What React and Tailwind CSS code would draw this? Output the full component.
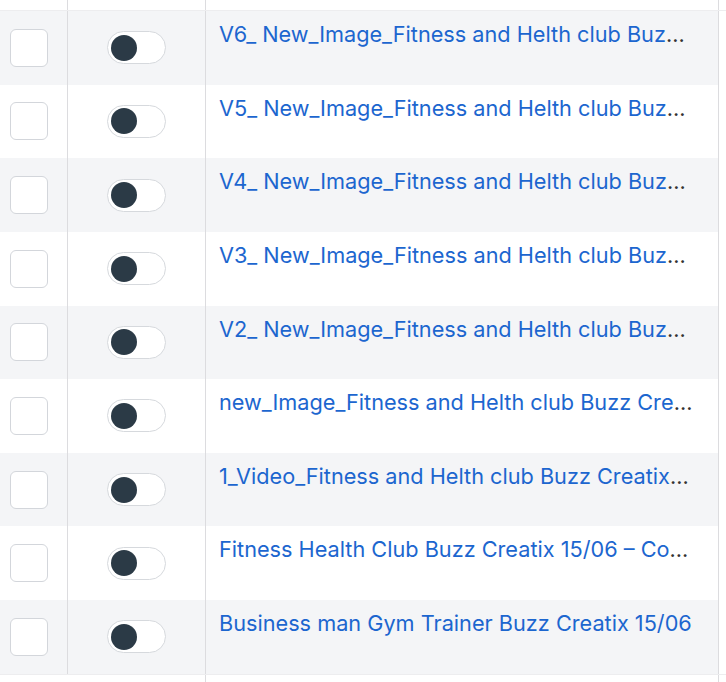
import React from "react";

const rows = [
  "V6_ New_Image_Fitness and Helth club Buzz Creatix 15/06",
  "V5_ New_Image_Fitness and Helth club Buzz Creatix 15/06",
  "V4_ New_Image_Fitness and Helth club Buzz Creatix 15/06",
  "V3_ New_Image_Fitness and Helth club Buzz Creatix 15/06",
  "V2_ New_Image_Fitness and Helth club Buzz Creatix 15/06",
  "new_Image_Fitness and Helth club Buzz Creatix 15/06",
  "1_Video_Fitness and Helth club Buzz Creatix 15/06",
  "Fitness Health Club Buzz Creatix 15/06 – Copy",
  "Business man Gym Trainer Buzz Creatix 15/06",
];

function Row({ title, gray }) {
  const bg = gray ? "bg-[#f4f5f7]" : "bg-white";
  return (
    <div className="grid grid-cols-[68px_138px_513px_1fr] h-[73.625px]">
      <div className={`${bg} border-r border-[#dcdcdf] flex items-center pl-[10px]`}>
        <div className="w-[38px] h-[38px] rounded-[6px] border border-[#d3d6db] bg-white" />
      </div>
      <div className={`${bg} border-r border-[#dcdcdf] flex items-center justify-center`}>
        <div className="w-[59px] h-[33px] rounded-full border border-[#d6d9dd] bg-white flex items-center pl-[3px]">
          <div className="w-[26px] h-[26px] rounded-full bg-[#2b3a46]" />
        </div>
      </div>
      <div className={`${bg} border-r border-[#dcdcdf] pl-[13px] pr-[24px] pt-[8px]`}>
        <div className="whitespace-nowrap overflow-hidden text-ellipsis text-[21.7px] leading-[30px] text-[#333] font-['Inter',sans-serif]">
          <span className="text-[#1c66cf]">{title}</span>
        </div>
      </div>
      <div className="bg-white" />
    </div>
  );
}

export default function App() {
  return (
    <div className="w-[726px] h-[682px] bg-white overflow-hidden">
      <div className="grid grid-cols-[68px_138px_513px_1fr] h-[11px] border-b border-[#ededef]">
        <div className="border-r border-[#dcdcdf]" />
        <div className="border-r border-[#dcdcdf]" />
        <div className="border-r border-[#dcdcdf]" />
        <div />
      </div>
      {rows.map((t, i) => (
        <Row key={i} title={t} gray={i % 2 === 0} />
      ))}
      <div className="grid grid-cols-[68px_138px_513px_1fr] h-[20px] border-t border-[#ededef]">
        <div />
        <div className="border-r border-[#dcdcdf]" />
        <div className="border-r border-[#dcdcdf]" />
        <div />
      </div>
    </div>
  );
}
